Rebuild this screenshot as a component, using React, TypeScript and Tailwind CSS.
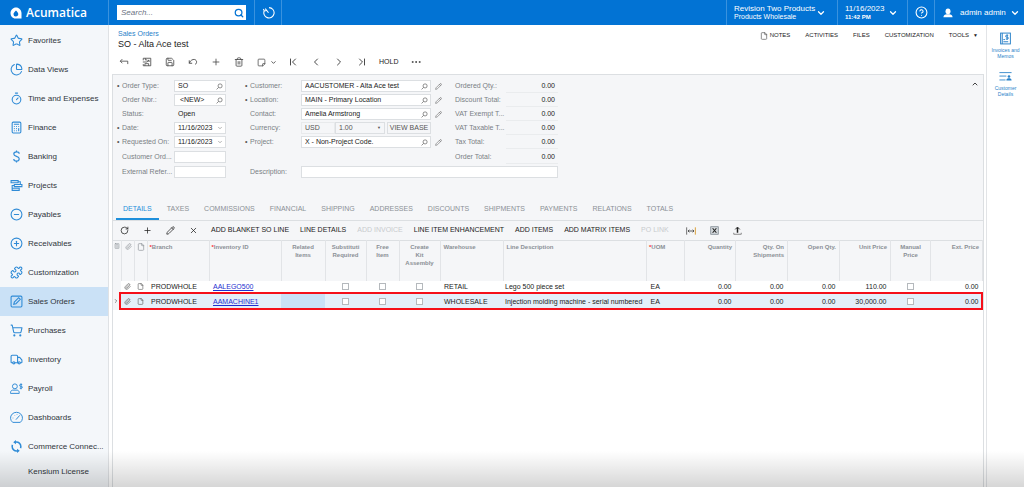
import { type ComponentType, type ReactNode } from 'react';
import {
  Calculator,
  ChartPie,
  ChevronDown,
  ChevronFirst,
  ChevronLast,
  ChevronLeft,
  ChevronRight,
  ChevronUp,
  CircleHelp,
  CircleMinus,
  CirclePlus,
  Ellipsis,
  File,
  Paperclip,
  Pencil,
  Plus,
  Puzzle,
  RotateCw,
  Save,
  Search,
  ShoppingCart,
  Star,
  StickyNote,
  Timer,
  Trash2,
  Truck,
  X,
} from 'lucide-react';

type IconType = ComponentType<{ className?: string; strokeWidth?: number }>;

function ProjectsIcon({ className }: { className?: string }) {
  return (
    <svg className={className} viewBox="0 0 24 24" fill="none" stroke="currentColor" strokeWidth="2">
      <path d="M2 3h13v4H2zM8 10h14v4H8zM4 17h13v4H4zM15 5h4v5M8 12H4v5" />
    </svg>
  );
}

function DollarIcon({ className }: { className?: string }) {
  return (
    <svg className={className} viewBox="0 0 24 24" fill="none" stroke="currentColor" strokeWidth="2.2">
      <path d="M17 7c0-2-2-3.500-5-3.500S7 5 7 7.500c0 5.500 10 3 10 8.500 0 3-2 4.500-5 4.500S7 19 7 16.500M12 1v3M12 20v3" />
    </svg>
  );
}

function OrdersIcon({ className }: { className?: string }) {
  return (
    <svg className={className} viewBox="0 0 24 24" fill="none" stroke="currentColor" strokeWidth="2">
      <rect x="2" y="2" width="20" height="20" rx="2" />
      <path d="m7 17 1-4 8-8 3 3-8 8z" />
    </svg>
  );
}

function PayrollIcon({ className }: { className?: string }) {
  return (
    <svg className={className} viewBox="0 0 24 24" fill="none" stroke="currentColor" strokeWidth="1.8">
      <circle cx="9" cy="8" r="4.5" />
      <path d="M1 21v-2c0-2 2-4 4-4h8c2 0 4 2 4 4v2zM22.5 4.5h-3a1.7 1.7 0 0 0 0 3.500h1.500a1.700 1.700 0 0 1 0 3.500h-3M20.300 2.500v11" />
    </svg>
  );
}

function DashboardIcon({ className }: { className?: string }) {
  return (
    <svg className={className} viewBox="0 0 24 24" fill="none" stroke="currentColor" strokeWidth="1.8">
      <path d="M5 21a11 10.500 0 1 1 14 0zM11 16l7-8" />
      <path d="M5 13h1M8 7.500l.7.700M13 5.500v1" />
    </svg>
  );
}

function SyncIcon({ className }: { className?: string }) {
  return (
    <svg className={className} viewBox="0 0 24 24" fill="none" stroke="currentColor" strokeWidth="2.800">
      <path d="M10 4c6-1 10 3 10 8 0 1-.200 2-.600 3M14 20c-6 1-10-3-10-8 0-1 .200-2 .600-3" />
      <path d="M11 0v8L6 4zM13 16v8l5-4z" fill="currentColor" stroke="none" />
    </svg>
  );
}

function SaveCloseIcon({ className }: { className?: string }) {
  return (
    <svg className={className} viewBox="0 0 24 24" fill="none" stroke="currentColor" strokeWidth="2">
      <path d="M3 8V3h18v18H3v-4M7 21v-5h9v5M12 12H2M8 3v4h4M17 8l-5 4M17 8v4M17 8h-4" />
    </svg>
  );
}

function BackIcon({ className }: { className?: string }) {
  return (
    <svg className={className} viewBox="0 0 24 24" fill="none" stroke="currentColor" strokeWidth="2">
      <path d="M8 5 3 10l5 5M3 10h18v7" />
    </svg>
  );
}

function UndoIcon({ className }: { className?: string }) {
  return (
    <svg className={className} viewBox="0 0 24 24" fill="none" stroke="currentColor" strokeWidth="2.200">
      <path d="M3 8v7h7M3 15C6 8 11 5 16 6c6 2 6 9 1 12" />
    </svg>
  );
}

function HistoryIcon({ className }: { className?: string }) {
  return (
    <svg className={className} viewBox="0 0 24 24" fill="none" stroke="currentColor" strokeWidth="2">
      <path d="M13 3a9.500 9.500 0 1 1-8.500 5M6 5l6 7.500M2.500 5.500l2 4 4-1.500" />
    </svg>
  );
}

function LookupIcon({ className }: { className?: string }) {
  return (
    <svg className={className} viewBox="0 0 24 24" fill="none" stroke="currentColor" strokeWidth="2.500">
      <circle cx="14" cy="10" r="7" />
      <path d="m9 15-7 7" />
    </svg>
  );
}

function FitIcon({ className }: { className?: string }) {
  return (
    <svg className={className} viewBox="0 0 30 24" fill="none" strokeWidth="2.500">
      <path d="M2 1v22" stroke="#555" />
      <path d="M28 1v22" stroke="#d9a13b" strokeWidth="3" />
      <path d="M6 12h18M10 8l-4 4 4 4M20 8l4 4-4 4" stroke="#444" />
    </svg>
  );
}

function ExcelIcon({ className }: { className?: string }) {
  return (
    <svg className={className} viewBox="0 0 24 24" fill="none">
      <rect x="2" y="2" width="20" height="20" fill="#d5dade" stroke="#75808a" strokeWidth="2" />
      <path d="m7 6 10 12M17 6 7 18" stroke="#222" strokeWidth="3" />
    </svg>
  );
}

function UploadIcon({ className }: { className?: string }) {
  return (
    <svg className={className} viewBox="0 0 24 24" fill="none" stroke="#222" strokeWidth="2.500">
      <path d="M12 18V4" strokeWidth="4" />
      <path d="m6 9 6-6 6 6" />
      <path d="M2 18v4h20v-4" stroke="#666" strokeWidth="2" />
    </svg>
  );
}

function InvoiceIcon({ className }: { className?: string }) {
  return (
    <svg className={className} viewBox="0 0 24 24" fill="none" stroke="currentColor" strokeWidth="1.800">
      <rect x="3" y="2" width="18" height="20" />
      <path d="M8 18h9M8 14h3M17 6h-3a1.700 1.700 0 0 0 0 3.500h1.500a1.700 1.700 0 0 1 0 3.500h-3M15 4.500v10M6 2v20" />
    </svg>
  );
}

function CustomerIcon({ className }: { className?: string }) {
  return (
    <svg className={className} viewBox="0 0 30 24" fill="none" stroke="currentColor" strokeWidth="2">
      <path d="M1 3h28M1 11h16M1 20h14" />
      <circle cx="23" cy="12" r="3" fill="currentColor" stroke="none" />
      <path d="M17 21c0-4 3-5 6-5s6 1 6 5z" fill="currentColor" stroke="none" />
    </svg>
  );
}

function UserIcon({ className }: { className?: string }) {
  return (
    <svg className={className} viewBox="0 0 24 24" fill="currentColor">
      <ellipse cx="12" cy="8" rx="6" ry="7" />
      <path d="M1 22c0-5 4-6 8-7h6c4 1 8 2 8 7z" />
    </svg>
  );
}

function LogoMark({ className }: { className?: string }) {
  return (
    <svg className={className} viewBox="0 0 24 24">
      <path
        fill="#fff"
        fillRule="evenodd"
        d="M12 1c6 0 11 5 11 11v11H11C5 23 1 18 1 12S6 1 12 1zm0 6c-3 3-5 5-5 7.500A4.500 4.500 0 0 0 11.500 19c3 0 5-2 5-4.500C16.500 12 15 10 12 7z"
      />
    </svg>
  );
}

const modules: { name: string; icon?: IconType }[] = [
  { name: 'Favorites', icon: Star },
  { name: 'Data Views', icon: ChartPie },
  { name: 'Time and Expenses', icon: Timer },
  { name: 'Finance', icon: Calculator },
  { name: 'Banking', icon: DollarIcon },
  { name: 'Projects', icon: ProjectsIcon },
  { name: 'Payables', icon: CircleMinus },
  { name: 'Receivables', icon: CirclePlus },
  { name: 'Customization', icon: Puzzle },
  { name: 'Sales Orders', icon: OrdersIcon },
  { name: 'Purchases', icon: ShoppingCart },
  { name: 'Inventory', icon: Truck },
  { name: 'Payroll', icon: PayrollIcon },
  { name: 'Dashboards', icon: DashboardIcon },
  { name: 'Commerce Connec...', icon: SyncIcon },
  { name: 'Kensium License' },
];

const toolbar: { label: string; icon: IconType }[] = [
  { label: 'Back', icon: BackIcon },
  { label: 'Save and close', icon: SaveCloseIcon },
  { label: 'Save', icon: Save },
  { label: 'Undo', icon: UndoIcon },
  { label: 'Add', icon: Plus },
  { label: 'Delete', icon: Trash2 },
];

const navigation: { label: string; icon: IconType }[] = [
  { label: 'First', icon: ChevronFirst },
  { label: 'Previous', icon: ChevronLeft },
  { label: 'Next', icon: ChevronRight },
  { label: 'Last', icon: ChevronLast },
];

const tabs = [
  'DETAILS',
  'TAXES',
  'COMMISSIONS',
  'FINANCIAL',
  'SHIPPING',
  'ADDRESSES',
  'DISCOUNTS',
  'SHIPMENTS',
  'PAYMENTS',
  'RELATIONS',
  'TOTALS',
];

const gridIcons: { label: string; icon: IconType }[] = [
  { label: 'Refresh', icon: RotateCw },
  { label: 'Add row', icon: Plus },
  { label: 'Edit row', icon: Pencil },
  { label: 'Delete row', icon: X },
];

const gridActions = [
  { label: 'ADD BLANKET SO LINE' },
  { label: 'LINE DETAILS' },
  { label: 'ADD INVOICE', disabled: true },
  { label: 'LINE ITEM ENHANCEMENT' },
  { label: 'ADD ITEMS' },
  { label: 'ADD MATRIX ITEMS' },
  { label: 'PO LINK', disabled: true },
];

const lines = [
  { item: 'AALEGO500', warehouse: 'RETAIL', description: 'Lego 500 piece set', price: '110.00' },
  {
    item: 'AAMACHINE1',
    warehouse: 'WHOLESALE',
    description: 'Injection molding machine - serial numbered',
    price: '30,000.00',
    selected: true,
  },
];

function Header() {
  return (
    <header className="flex h-[25px] items-stretch bg-[#0273d4] text-white">
      <a href="#" className="flex w-[109px] items-center gap-1 border-r border-[#3a92de] pl-[10px]">
        <LogoMark className="size-3" />
        <span className="font-['Open_Sans',sans-serif] text-[12px] leading-4 font-semibold">Acumatica</span>
      </a>
      <div className="flex w-[146px] items-center border-r border-[#3a92de] px-2">
        <div className="flex h-[15px] flex-1 items-center bg-white pr-[2px]">
          <input
            type="search"
            aria-label="Search"
            placeholder="Search..."
            className="min-w-0 flex-1 pl-1 text-[8px] leading-3 text-gray-800 outline-none placeholder:text-gray-500 placeholder:italic"
          />
          <Search className="size-[10px] text-[#0273d4]" strokeWidth={3} />
        </div>
      </div>
      <button aria-label="History" className="flex w-[27px] items-center justify-center border-r border-[#3a92de]">
        <HistoryIcon className="size-[13px]" />
      </button>
      <div className="flex-1" />
      <button className="flex w-[111px] items-center border-l border-[#3a92de] pl-[7px] text-left">
        <span className="w-[82px]">
          <span className="block text-[8px] leading-[8px]">Revision Two Products</span>
          <span className="block text-[7px] leading-[8px]">Products Wholesale</span>
        </span>
        <ChevronDown className="size-[10px]" strokeWidth={3} />
      </button>
      <button className="flex w-[70px] items-center border-l border-[#3a92de] pl-[7px] text-left">
        <span className="w-[43px]">
          <span className="block text-[8px] leading-[8px]">11/16/2023</span>
          <span className="block text-[6px] leading-[8px] font-bold">11:42 PM</span>
        </span>
        <ChevronDown className="size-[10px]" strokeWidth={3} />
      </button>
      <button aria-label="Help" className="flex w-[27px] items-center justify-center border-l border-[#3a92de]">
        <CircleHelp className="size-[13px]" />
      </button>
      <button className="flex w-[90px] items-center border-l border-[#3a92de] pl-2 text-[8px]">
        <UserIcon className="mr-[7px] size-[10px]" />
        <span className="w-[50px] text-left">admin admin</span>
        <ChevronDown className="size-[10px]" strokeWidth={3} />
      </button>
    </header>
  );
}

function Sidebar() {
  return (
    <nav className="w-[109px] shrink-0 border-r border-[#dfe2e5] bg-[#f4f7fa] pt-px">
      {modules.map(({ name, icon: Icon }) => (
        <a
          key={name}
          href="#"
          className={`flex items-center gap-[5px] pl-[10px] text-[8px] whitespace-nowrap text-[#2f353b] ${
            Icon ? 'h-[29px]' : 'h-[22px]'
          } ${name === 'Sales Orders' ? 'bg-[#cae1f6]' : ''}`}
        >
          <span className="w-[13px] text-[#2f8bd6]">{Icon ? <Icon className="size-[13px]" strokeWidth={2} /> : null}</span>
          {name}
        </a>
      ))}
    </nav>
  );
}

function TitleBar() {
  return (
    <div className="flex items-start justify-between pl-[6px]">
      <div className="pt-1">
        <a href="#" className="block text-[7px] leading-[9px] text-[#2a82c9]">
          Sales Orders
        </a>
        <h1 className="text-[9px] leading-3 text-[#222]">SO - Alta Ace test</h1>
      </div>
      <div className="flex items-center gap-[15px] pt-[6px] pr-[6px] text-[6px] leading-[9px] text-[#222]">
        <button className="flex items-center gap-[2px]">
          <File className="size-2 text-[#555]" />
          NOTES
        </button>
        <button>ACTIVITIES</button>
        <button>FILES</button>
        <button>CUSTOMIZATION</button>
        <button className="flex items-center gap-1">
          TOOLS <span className="text-[5px]">▼</span>
        </button>
      </div>
    </div>
  );
}

function Toolbar() {
  return (
    <div className="flex h-6 items-center text-[#4a4a4a]">
      {toolbar.map(({ label, icon: Icon }) => (
        <button key={label} aria-label={label} className="flex w-[23px] justify-center">
          <Icon className="size-[10px]" strokeWidth={2} />
        </button>
      ))}
      <button aria-label="Clipboard" className="flex w-[27px] items-center justify-end gap-1">
        <StickyNote className="size-[9px] -scale-y-100" strokeWidth={2} />
        <ChevronDown className="size-[7px]" strokeWidth={3} />
      </button>
      <div className="w-1" />
      {navigation.map(({ label, icon: Icon }) => (
        <button key={label} aria-label={label} className="flex w-[23px] justify-center">
          <Icon className="size-3" strokeWidth={2} />
        </button>
      ))}
      <button className="ml-[6px] text-[7px] text-[#222]">HOLD</button>
      <button aria-label="More" className="ml-3">
        <Ellipsis className="size-3" />
      </button>
    </div>
  );
}

function Label({ htmlFor, required, children }: { htmlFor: string; required?: boolean; children: ReactNode }) {
  return (
    <label htmlFor={htmlFor} className="flex h-3 items-center whitespace-nowrap text-[#7a7f85]">
      <span className="w-[5px] text-[#555]">{required ? '•' : ''}</span>
      {children}
    </label>
  );
}

function Field({ id, value, icon }: { id: string; value?: string; icon?: 'lookup' | 'date' }) {
  return (
    <div className="flex h-3 items-center border border-[#dcdfe2] bg-white px-[2px]">
      <input id={id} defaultValue={value} className="h-[10px] w-full min-w-0 flex-1 pl-px text-[#222] outline-none" />
      {icon === 'lookup' ? <LookupIcon className="size-[7px] text-[#666]" /> : null}
      {icon === 'date' ? <ChevronDown className="size-[6px] text-[#666]" /> : null}
    </div>
  );
}

function EditLink({ label }: { label: string }) {
  return (
    <button type="button" aria-label={label} className="flex h-3 items-center pl-1">
      <Pencil className="size-[7px] text-[#666]" />
    </button>
  );
}

function Total({ id, label, value }: { id: string; label: string; value: string }) {
  return (
    <>
      <label htmlFor={id} className="flex h-3 items-center whitespace-nowrap text-[#7a7f85]">
        {label}
      </label>
      <output id={id} className="flex h-[13px] items-center justify-end border-b border-[#eaecee] pr-[3px] text-[#222]">
        {value}
      </output>
    </>
  );
}

const rowTracks = 'grid-rows-[14px_14px_14px_14px_15px_15px_12px]';

function OrderForm() {
  return (
    <form className="flex h-[126px] items-start bg-[#f5f6f8] pt-[5px] pl-1 text-[7px]">
      <div className={`grid grid-cols-[57px_52px] items-start ${rowTracks}`}>
        <Label htmlFor="type" required>Order Type:</Label>
        <Field id="type" value="SO" icon="lookup" />
        <Label htmlFor="number">Order Nbr.:</Label>
        <Field id="number" value=" <NEW>" icon="lookup" />
        <Label htmlFor="status">Status:</Label>
        <output id="status" className="flex h-3 items-center pl-1 text-[#222]">Open</output>
        <Label htmlFor="date" required>Date:</Label>
        <Field id="date" value="11/16/2023" icon="date" />
        <Label htmlFor="requested" required>Requested On:</Label>
        <Field id="requested" value="11/16/2023" icon="date" />
        <Label htmlFor="custOrder">Customer Ord...</Label>
        <Field id="custOrder" />
        <Label htmlFor="extRef">External Refer...</Label>
        <Field id="extRef" />
      </div>

      <div className={`ml-[19px] grid grid-cols-[56px_130px_24px_51px_52px] items-start ${rowTracks}`}>
        <Label htmlFor="customer" required>Customer:</Label>
        <Field id="customer" value="AACUSTOMER - Alta Ace test" icon="lookup" />
        <EditLink label="Edit customer" />
        <Total id="ordered" label="Ordered Qty.:" value="0.00" />

        <Label htmlFor="location" required>Location:</Label>
        <Field id="location" value="MAIN - Primary Location" icon="lookup" />
        <EditLink label="Edit location" />
        <Total id="discount" label="Discount Total:" value="0.00" />

        <Label htmlFor="contact">Contact:</Label>
        <Field id="contact" value="Amelia Armstrong" icon="lookup" />
        <EditLink label="Edit contact" />
        <Total id="vatExempt" label="VAT Exempt T..." value="0.00" />

        <Label htmlFor="currency">Currency:</Label>
        <div className="flex h-3 items-stretch text-[#555]">
          <input id="currency" defaultValue="USD" className="w-[34px] border border-[#e8eaec] pl-[3px] outline-none" />
          <button
            type="button"
            aria-label="Exchange rate"
            className="flex w-[50px] items-center justify-between border border-[#dcdfe2] px-[3px]"
          >
            1.00 <span className="text-[4px]">▼</span>
          </button>
          <button type="button" className="ml-[2px] flex-1 border border-[#dcdfe2] leading-[10px] whitespace-nowrap">
            VIEW BASE
          </button>
        </div>
        <span />
        <Total id="vatTaxable" label="VAT Taxable T..." value="0.00" />

        <Label htmlFor="project" required>Project:</Label>
        <Field id="project" value="X - Non-Project Code." icon="lookup" />
        <EditLink label="Edit project" />
        <Total id="tax" label="Tax Total:" value="0.00" />

        <div className="col-span-3" />
        <Total id="total" label="Order Total:" value="0.00" />

        <Label htmlFor="description">Description:</Label>
        <div className="col-span-4">
          <Field id="description" />
        </div>
      </div>
      <button type="button" aria-label="Collapse" className="mr-1 ml-auto text-[#444]">
        <ChevronUp className="size-2" strokeWidth={3} />
      </button>
    </form>
  );
}

function Tabs() {
  return (
    <div
      role="tablist"
      className="flex h-5 items-stretch gap-px border-b border-[#dcdfe2] bg-[#f5f6f8] pl-[3px] text-[7px]"
    >
      {tabs.map((tab, i) => (
        <button
          key={tab}
          role="tab"
          aria-selected={i === 0}
          className={`border-b-2 px-[7px] ${
            i === 0 ? 'border-[#1e8fdb] text-[#1e8fdb]' : 'border-transparent text-[#8b9096]'
          }`}
        >
          {tab}
        </button>
      ))}
    </div>
  );
}

function GridToolbar() {
  return (
    <div className="flex h-[19px] items-center bg-[#f5f6f8] text-[7px] whitespace-nowrap text-[#222]">
      {gridIcons.map(({ label, icon: Icon }) => (
        <button key={label} aria-label={label} className="flex w-[23px] justify-center">
          <Icon className="size-[9px]" strokeWidth={2} />
        </button>
      ))}
      <div className="flex items-center gap-[11px] pl-[6px]">
        {gridActions.map(({ label, disabled }) => (
          <button key={label} disabled={disabled} className="disabled:text-[#c8cbce]">
            {label}
          </button>
        ))}
        <button aria-label="Fit columns" className="ml-[6px]">
          <FitIcon className="h-2 w-[10px]" />
        </button>
        <button aria-label="Export to Excel" className="ml-[3px]">
          <ExcelIcon className="size-[9px]" />
        </button>
        <button aria-label="Load records" className="ml-[3px]">
          <UploadIcon className="size-[9px]" />
        </button>
      </div>
    </div>
  );
}

function Check({ label }: { label: string }) {
  return (
    <input
      type="checkbox"
      aria-label={label}
      className="mx-auto block size-[7px] appearance-none border border-[#b5b9bd] bg-white checked:bg-[#1e8fdb]"
    />
  );
}

function Th({ className = 'px-[3px]', required, children }: { className?: string; required?: boolean; children?: ReactNode }) {
  return (
    <th className={`border-r border-[#e2e4e7] pt-[2px] align-top ${className}`}>
      {required ? <span className="text-red-500">*</span> : null}
      {children}
    </th>
  );
}

function LinesTable() {
  return (
    <div className="relative">
      <table className="w-full table-fixed border-collapse text-[7px] leading-[9px] whitespace-nowrap text-[#222]">
        <thead>
          <tr className="h-[40px] border-t border-[#dcdfe2] bg-[#f5f6f8] text-left text-[6px] leading-2 whitespace-normal text-[#8b9096]">
            <Th className="w-2 px-px"><Calculator className="size-[6px]" /></Th>
            <Th className="w-[13px] px-[3px]"><Paperclip className="size-[7px]" /></Th>
            <Th className="w-[13px] px-[2px]"><File className="size-2" /></Th>
            <Th className="w-[62px] px-[2px]" required>Branch</Th>
            <Th className="w-[72px] px-[2px]" required>Inventory ID</Th>
            <Th className="w-11 px-[3px] text-center">Related Items</Th>
            <Th className="w-[41px] px-[3px] text-center">Substituti Required</Th>
            <Th className="w-[33px] px-[3px] text-center">Free Item</Th>
            <Th className="w-[41px] px-[3px] text-center">Create<br />Kit<br />Assembly</Th>
            <Th className="w-[63px] px-[3px]">Warehouse</Th>
            <Th>Line Description</Th>
            <Th className="w-[38px] px-[2px]" required>UOM</Th>
            <Th className="w-[51px] px-[3px] text-right">Quantity</Th>
            <Th className="w-[52px] px-[3px] text-right">Qty. On Shipments</Th>
            <Th className="w-[52px] px-[3px] text-right">Open Qty.</Th>
            <Th className="w-[51px] px-[3px] text-right">Unit Price</Th>
            <Th className="w-10 px-[3px] text-center">Manual Price</Th>
            <Th className="w-[52px] px-[3px] text-right">Ext. Price</Th>
          </tr>
        </thead>
        <tbody>
          {lines.map((line) => (
            <tr key={line.item} className={line.selected ? 'h-[17px] bg-[#e4eff9]' : 'h-3 bg-white'}>
              <td className="bg-[#f5f6f8]">{line.selected ? <ChevronRight className="size-[6px]" /> : null}</td>
              <td><Paperclip className="mx-auto size-[7px] text-[#555]" /></td>
              <td><File className="mx-auto size-[7px] text-[#555]" /></td>
              <td className="pl-1">PRODWHOLE</td>
              <td className="pl-1"><a href="#" className="text-[#1f2fd0] underline">{line.item}</a></td>
              <td className={line.selected ? 'bg-[#cae1f6]' : ''} />
              <td><Check label="Substitution required" /></td>
              <td><Check label="Free item" /></td>
              <td><Check label="Create kit assembly" /></td>
              <td className="pl-1">{line.warehouse}</td>
              <td className="pl-[2px]">{line.description}</td>
              <td className="pl-1">EA</td>
              <td className="pr-1 text-right">0.00</td>
              <td className="pr-1 text-right">0.00</td>
              <td className="pr-1 text-right">0.00</td>
              <td className="pr-1 text-right">{line.price}</td>
              <td><Check label="Manual price" /></td>
              <td className="pr-1 text-right">0.00</td>
            </tr>
          ))}
        </tbody>
      </table>
      {/* highlight frame over the selected line */}
      <div className="pointer-events-none absolute right-0 bottom-0 left-[6px] h-[18px] border-2 border-[#f5101a]" />
    </div>
  );
}

function SideLinks() {
  return (
    <aside className="flex w-[38px] shrink-0 flex-col items-center gap-3 border-l border-[#e2e4e7] bg-white pt-[7px] text-center text-[5px] leading-[6px] text-[#2a82c9]">
      <a href="#" className="flex flex-col items-center gap-[2px]">
        <InvoiceIcon className="size-[13px]" />
        <span>Invoices and<br />Memos</span>
      </a>
      <a href="#" className="flex flex-col items-center gap-[3px]">
        <CustomerIcon className="h-[11px] w-[13px]" />
        <span>Customer<br />Details</span>
      </a>
    </aside>
  );
}

export default function App() {
  return (
    <div className="relative flex min-h-screen flex-col bg-white font-['Liberation_Sans',Arial,sans-serif]">
      <Header />
      <div className="flex flex-1 items-stretch">
        <Sidebar />
        <main className="flex min-w-0 flex-1 flex-col pr-[2px] pl-[3px]">
          <TitleBar />
          <Toolbar />
          <div className="flex-1 border border-b-0 border-[#dcdfe2]">
            <OrderForm />
            <Tabs />
            <GridToolbar />
            <LinesTable />
          </div>
        </main>
        <SideLinks />
      </div>
      <div className="pointer-events-none absolute inset-x-0 bottom-0 h-9 bg-linear-to-b from-transparent to-black/16" />
    </div>
  );
}
